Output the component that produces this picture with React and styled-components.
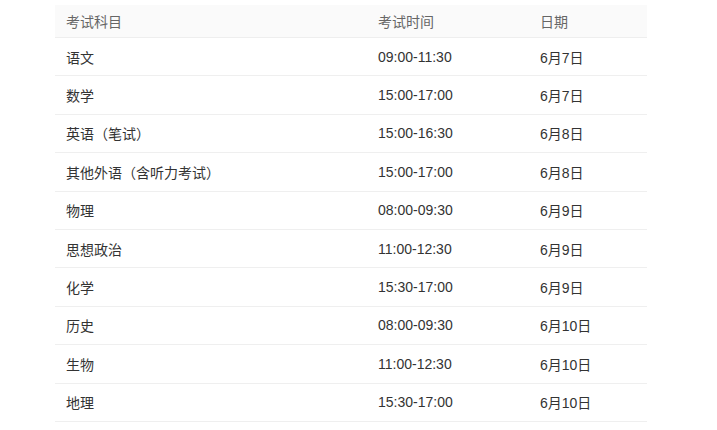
import React from "react";
import styled, { createGlobalStyle } from "styled-components";

const rows = [
  ["语文", "09:00-11:30", "6月7日"],
  ["数学", "15:00-17:00", "6月7日"],
  ["英语（笔试）", "15:00-16:30", "6月8日"],
  ["其他外语（含听力考试）", "15:00-17:00", "6月8日"],
  ["物理", "08:00-09:30", "6月9日"],
  ["思想政治", "11:00-12:30", "6月9日"],
  ["化学", "15:30-17:00", "6月9日"],
  ["历史", "08:00-09:30", "6月10日"],
  ["生物", "11:00-12:30", "6月10日"],
  ["地理", "15:30-17:00", "6月10日"],
];

const App = () => {
  return (
    <>
      <GlobalStyle />
      <Wrapper>
        <Table>
          <colgroup>
            <col style={{ width: 312 }} />
            <col style={{ width: 162 }} />
            <col style={{ width: 118 }} />
          </colgroup>
          <thead>
            <tr>
              <Th>考试科目</Th>
              <Th>考试时间</Th>
              <Th>日期</Th>
            </tr>
          </thead>
          <tbody>
            {rows.map((row) => (
              <tr key={row[0]}>
                {row.map((cell, i) => (
                  <Td key={i}>{cell}</Td>
                ))}
              </tr>
            ))}
          </tbody>
        </Table>
      </Wrapper>
    </>
  );
};

const GlobalStyle = createGlobalStyle`
  body {
    margin: 0;
    background: #fff;
    font-family: "Liberation Sans", "Noto Sans CJK SC", sans-serif;
  }
`;
const Wrapper = styled.div`
  padding: 5px 0 0 55px;
`;
const Table = styled.table`
  width: 592px;
  border-collapse: collapse;
  table-layout: fixed;
  font-size: 14px;
`;
const Th = styled.th`
  height: 32.5px;
  padding: 0 11px;
  box-sizing: border-box;
  background: #fafafa;
  color: #666;
  font-weight: normal;
  text-align: left;
  border-bottom: 1px solid #eee;
`;
const Td = styled.td`
  height: 38.4px;
  padding: 0 11px;
  box-sizing: border-box;
  color: #333;
  text-align: left;
  border-bottom: 1px solid #efefef;
`;
export default App;
